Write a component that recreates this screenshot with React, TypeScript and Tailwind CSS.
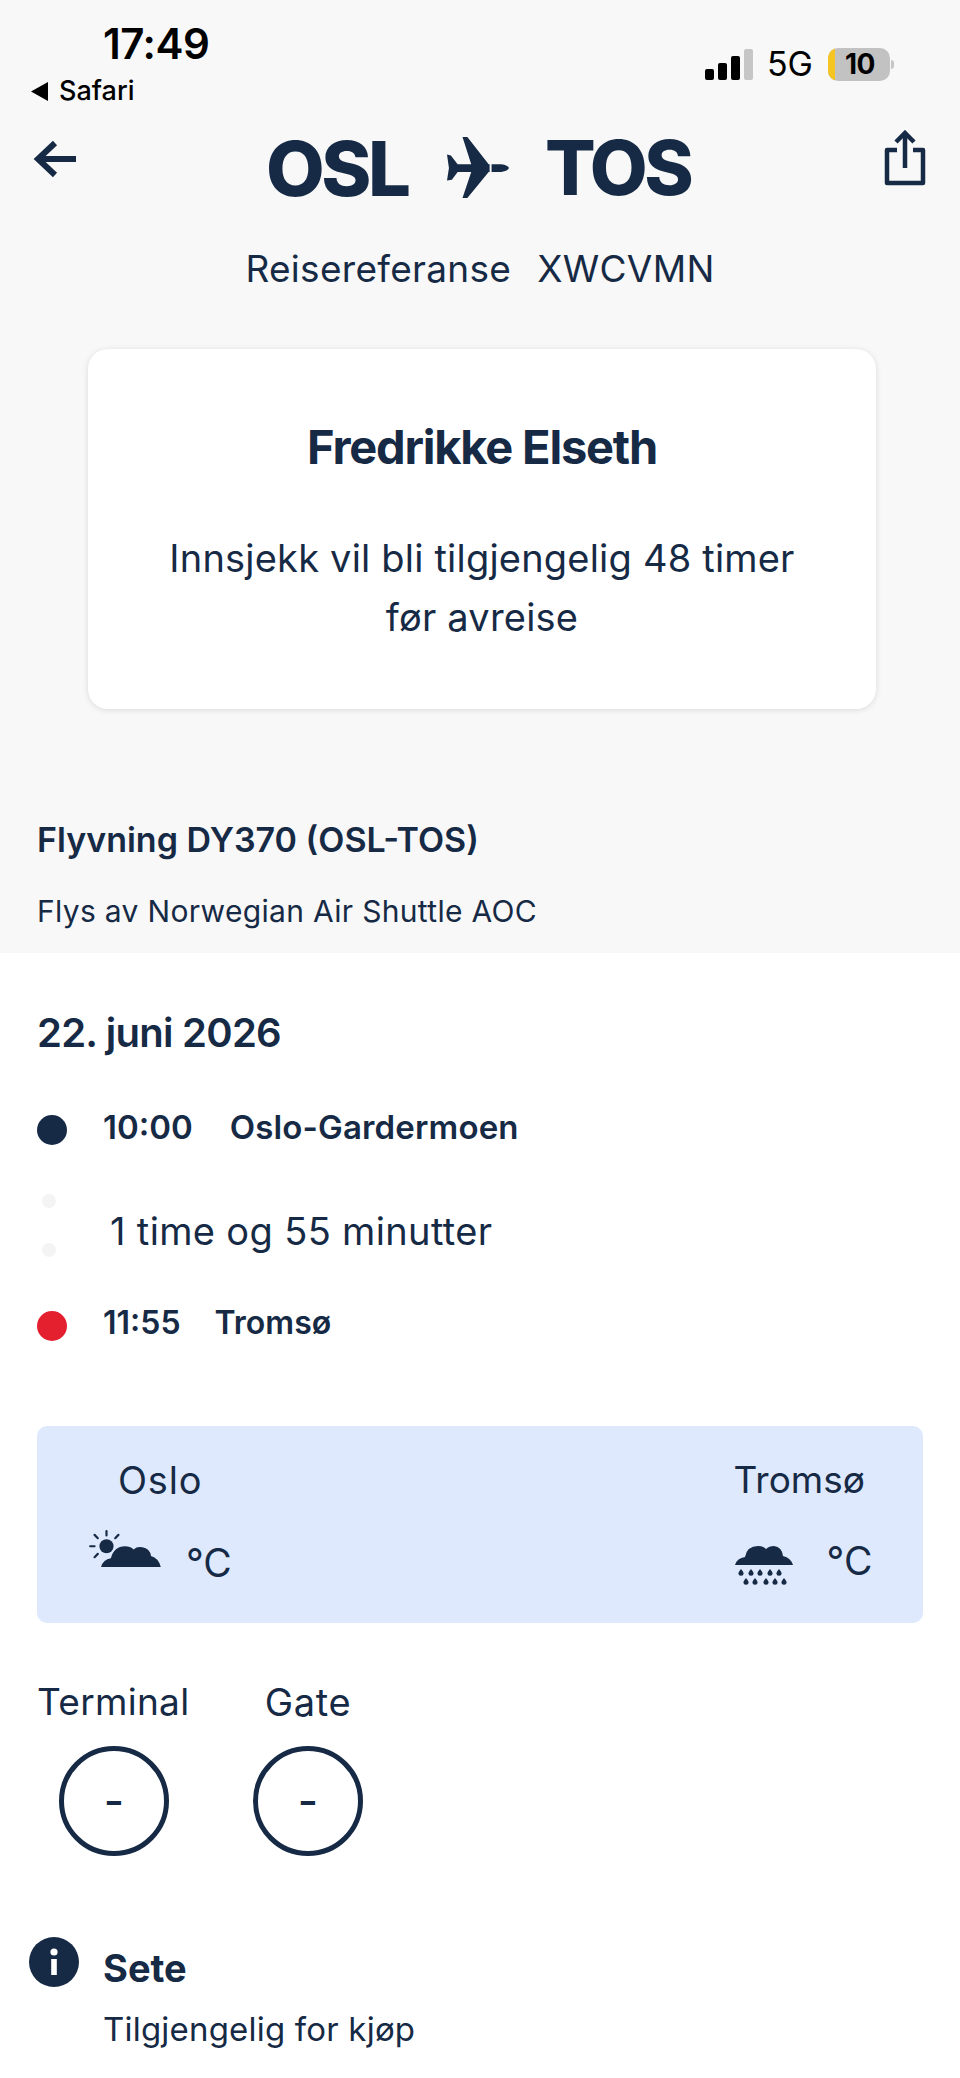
const ink = "#162a45";

function Plane() {
  return (
    <svg viewBox="0 0 64 64" className="w-[62px] h-[62px] shrink-0" fill={ink}>
      <path d="M16 0 L21 0 L43 28 L44 28 L44 36 L43 36 L21 63 L16 63 L25 36 L11 36 L5 44 L0 45 L2 32 L0 18 L4 19 L11 28 L25 28 Z" />
      <path d="M46 28 L56 28 Q63 29 64 32 Q63 35 56 36 L46 36 Z" />
    </svg>
  );
}

function Share() {
  return (
    <svg viewBox="0 0 42 56" className="w-[42px] h-[56px]" fill="none" stroke={ink} strokeWidth="4.5">
      <path d="M13 20 H3 V53 H39 V20 H29" strokeLinejoin="round" />
      <path d="M21 38 V3" />
      <path d="M12 12 L21 3 L30 12" />
    </svg>
  );
}

function Signal() {
  return (
    <div className="flex items-end gap-[4px] h-[31px]">
      <div className="w-[9px] h-[11px] rounded-[2px] bg-black" />
      <div className="w-[9px] h-[17px] rounded-[2px] bg-black" />
      <div className="w-[9px] h-[24px] rounded-[2px] bg-black" />
      <div className="w-[9px] h-[31px] rounded-[2px] bg-[#c6c6c6]" />
    </div>
  );
}

function Battery() {
  return (
    <div className="flex items-center">
      <div className="w-[62px] h-[33px] rounded-[10px] bg-[#c2c2c2] overflow-hidden flex relative">
        <div className="w-[7px] h-full bg-[#f5c623]" />
        <span className="flex-1 text-center text-[28px] leading-[33px] font-bold text-black pr-[5px] tracking-[-0.5px]">10</span>
      </div>
      <div className="w-[3px] h-[9px] rounded-r-full bg-[#c6c6c6] ml-[1px]" />
    </div>
  );
}

function SunCloud() {
  return (
    <svg viewBox="0 0 67 35" className="w-[73px] h-[38px] shrink-0" fill={ink}>
      <circle cx="16" cy="15" r="6.5" />
      <g stroke={ink} strokeWidth="2" strokeLinecap="round">
        <path d="M16 1 V5" />
        <path d="M5 4.5 L8 7.5" />
        <path d="M27 4.5 L24 7.5" />
        <path d="M1 15 H5" />
        <path d="M5 25 L8 22" />
      </g>
      <path d="M11 34 Q13 27 20 26 Q23 15 33 15 Q38 15 41 18 Q44 15 49 16 Q56 17 57 24 Q64 26 66 34 Z" />
    </svg>
  );
}

function RainCloud() {
  return (
    <svg viewBox="0 0 60 40" className="w-[60px] h-[40px] shrink-0" fill={ink}>
      <path d="M1 20 Q3 13 11 12 Q13 1 24 1 Q29 1 32 4 Q35 1 40 1 Q48 2 49 11 Q57 13 59 20 Z" />
      {[7, 17, 26, 36, 45].map((x) => (
        <path key={x} d="M0 -3 Q2.5 0 2.5 1.2 A2.5 2.5 0 0 1 -2.5 1.2 Q-2.5 0 0 -3 Z" transform={`translate(${x} 27)`} />
      ))}
      {[12, 21, 32, 41, 50].map((x) => (
        <path key={x} d="M0 -3 Q2.5 0 2.5 1.2 A2.5 2.5 0 0 1 -2.5 1.2 Q-2.5 0 0 -3 Z" transform={`translate(${x} 36)`} />
      ))}
    </svg>
  );
}

export default function App() {
  return (
    <div className="w-[960px] h-[2078px] overflow-hidden bg-white text-[#162a45] font-['Inter',sans-serif]">
      <div className="h-[953px] bg-[#f8f8f8]">
        {/* status bar */}
        <div className="h-[110px] flex justify-between">
          <div className="pl-[31px] pt-[20px]">
            <div className="pl-[72px] text-[42px] leading-[48px] font-semibold text-black tracking-[-0.5px]">17:49</div>
            <div className="flex items-center gap-[11px] mt-[8px] text-[27px] leading-[30px] text-black font-medium">
              <svg viewBox="0 0 17 19" className="w-[17px] h-[19px]" fill="#000"><path d="M17 0 V19 L0 9.5 Z" /></svg>
              <span>Safari</span>
            </div>
          </div>
          <div className="flex items-center gap-[14px] pr-[66px] pt-[26px] h-[110px] pb-[8px]">
            <Signal />
            <span className="text-[34px] leading-[40px] text-black mr-[1px]">5G</span>
            <Battery />
          </div>
        </div>

        {/* route header */}
        <div className="h-[100px] flex items-start justify-between pl-[33px] pr-[34px] relative">
          <svg viewBox="0 0 44 38" className="w-[44px] h-[38px] mt-[30px]" fill="none" stroke={ink} strokeWidth="6">
            <path d="M22 3 L5 19 L22 35" />
            <path d="M5 19 H43" />
          </svg>
          <div className="flex items-center absolute left-[266px] top-[16px]">
            <span className="text-[76px] leading-[84px] font-extrabold tracking-[-3.5px] w-[181px]">OSL</span>
            <Plane />
            <span className="text-[75px] leading-[84px] font-extrabold tracking-[-3.5px] ml-[36px]">TOS</span>
          </div>
          <div className="mt-[20px]"><Share /></div>
        </div>

        <div className="mt-[37px] flex justify-center gap-[26px] text-[37px] leading-[44px] tracking-[0.3px]">
          <span>Reisereferanse</span>
          <span>XWCVMN</span>
        </div>

        {/* card */}
        <div className="mt-[58px] ml-[88px] mr-[84px] h-[360px] rounded-[20px] bg-white shadow-[0_1px_6px_rgba(0,0,0,0.12)] flex flex-col items-center pt-[70px]">
          <div className="text-[47px] leading-[56px] font-bold tracking-[-1.2px]">Fredrikke Elseth</div>
          <div className="mt-[54px] text-[38px] leading-[59px] text-center tracking-[0.2px]">
            Innsjekk vil bli tilgjengelig 48 timer<br />før avreise
          </div>
        </div>

        <div className="mt-[110px] pl-[37px] text-[34px] leading-[42px] font-semibold">Flyvning DY370 (OSL-TOS)</div>
        <div className="mt-[31px] pl-[37px] text-[30px] leading-[38px] tracking-[0.32px]">Flys av Norwegian Air Shuttle AOC</div>
      </div>

      {/* white part */}
      <div className="px-[37px]">
        <div className="pt-[56px] text-[40px] leading-[48px] font-semibold tracking-[-0.75px]">22. juni 2026</div>

        <div className="mt-[49px] flex items-center">
          <div className="w-[30px] h-[30px] rounded-full bg-[#162a45] mt-[6px]" />
          <span className="ml-[36px] text-[33px] leading-[42px] font-semibold">10:00</span>
          <span className="ml-[37px] text-[33px] leading-[42px] font-semibold tracking-[0.15px]">Oslo-Gardermoen</span>
        </div>

        <div className="h-[158px] flex items-center relative">
          <div className="flex flex-col gap-[35px] ml-[5px] -mt-[3px]">
            <div className="w-[14px] h-[14px] rounded-full bg-[#f4f4f4]" />
            <div className="w-[14px] h-[14px] rounded-full bg-[#f4f4f4]" />
          </div>
          <span className="ml-[54px] mt-[7px] text-[38px] leading-[46px] tracking-[0.35px]">1 time og 55 minutter</span>
        </div>

        <div className="-mt-[4px] flex items-center">
          <div className="w-[30px] h-[30px] rounded-full bg-[#e4202f] mt-[6px]" />
          <span className="ml-[36px] text-[32px] leading-[42px] font-semibold">11:55</span>
          <span className="ml-[34px] text-[32px] leading-[42px] font-semibold">Tromsø</span>
        </div>

        {/* weather */}
        <div className="mt-[82px] h-[197px] rounded-[10px] bg-[#dee9fd] flex justify-between pt-[32px] pl-[52px] pr-[49px]">
          <div>
            <div className="pl-[29px] text-[38px] leading-[44px] tracking-[0.8px]">Oslo</div>
            <div className="mt-[28px] flex items-start">
              <SunCloud />
              <span className="ml-[24px] mt-[11px] text-[39px] leading-[44px]">°C</span>
            </div>
          </div>
          <div>
            <div className="text-[37px] leading-[44px] text-right mr-[9px]">Tromsø</div>
            <div className="mt-[43px] flex items-start">
              <RainCloud />
              <span className="ml-[33px] -mt-[6px] text-[39px] leading-[44px]">°C</span>
            </div>
          </div>
        </div>

        {/* terminal / gate */}
        <div className="mt-[57px] flex">
          <div className="w-[216px]">
            <div className="text-[37px] leading-[44px] tracking-[0.3px]">Terminal</div>
            <div className="mt-[22px] ml-[22px] w-[110px] h-[110px] rounded-full border-[5px] border-[#162a45] flex items-center justify-center text-[44px] font-medium">-</div>
          </div>
          <div className="flex flex-col items-center">
            <div className="text-[38px] leading-[44px] tracking-[0.6px]">Gate</div>
            <div className="mt-[22px] w-[110px] h-[110px] rounded-full border-[5px] border-[#162a45] flex items-center justify-center text-[44px] font-medium">-</div>
          </div>
        </div>

        {/* seat */}
        <div className="mt-[81px] flex -ml-[8px]">
          <svg viewBox="0 0 50 50" className="w-[50px] h-[50px] shrink-0" fill={ink}>
            <circle cx="25" cy="25" r="25" />
            <circle cx="25" cy="15" r="3.6" fill="#fff" />
            <rect x="22.2" y="22" width="5.6" height="16" fill="#fff" />
          </svg>
          <div className="ml-[24px] pt-[9px]">
            <div className="text-[38px] leading-[44px] font-bold">Sete</div>
            <div className="mt-[20px] text-[33px] leading-[38px] tracking-[0.2px]">Tilgjengelig for kjøp</div>
          </div>
        </div>
      </div>
    </div>
  );
}
